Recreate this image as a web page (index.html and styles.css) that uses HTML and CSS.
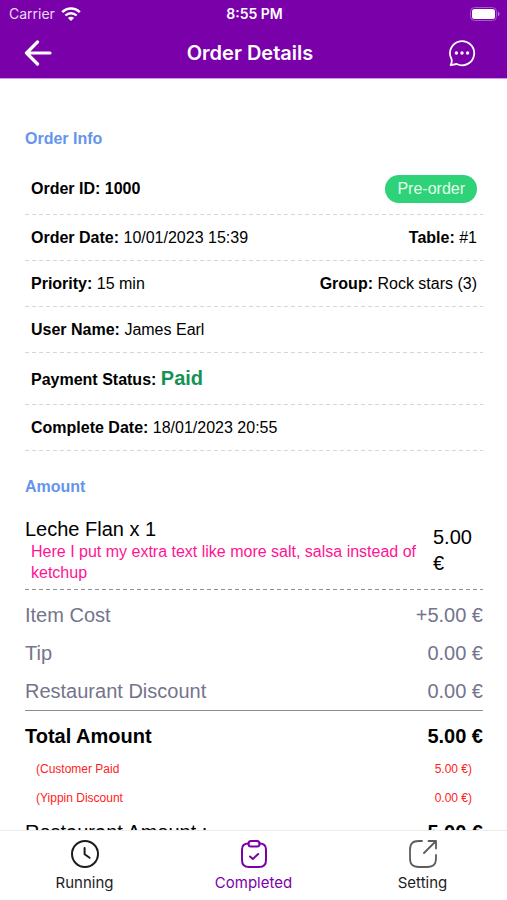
FILE: index.html
```html
<!DOCTYPE html>
<html lang="en">
<head>
<meta charset="utf-8">
<meta name="viewport" content="width=device-width, initial-scale=1">
<title>Order Details</title>
<link rel="stylesheet" href="styles.css">
</head>
<body>
<div class="app">
  <header class="header">
    <div class="status">
      <div class="carrier">
        <span>Carrier</span>
        <svg width="20" height="14" viewBox="0 0 20 14" fill="none" stroke="#fff" stroke-width="2.4">
          <path d="M1.2 5.2C6.1.2 13.9.2 18.8 5.2"/>
          <path d="M4.4 8.5c3.2-3.1 8-3.1 11.2 0"/>
          <path d="M10 14 6.9 11c1.8-1.6 4.4-1.6 6.2 0z" fill="#fff" stroke="none"/>
        </svg>
      </div>
      <span class="clock">8:55 PM</span>
      <svg class="battery" width="30" height="14" viewBox="0 0 30 14">
        <rect x=".5" y=".5" width="26" height="13" rx="4" fill="none" stroke="#a45acb"/>
        <rect x="2" y="2" width="23" height="10" rx="2.5" fill="#fff"/>
        <path d="M28 4.8c2 .6 2 3.8 0 4.4z" fill="#b87bdc"/>
      </svg>
    </div>
    <div class="titlebar">
      <button class="icon-button" type="button" aria-label="Back">
        <svg width="28" height="26" viewBox="0 0 28 26" fill="none" stroke="#fff" stroke-width="3.2" stroke-linecap="round" stroke-linejoin="round">
          <path d="M26 13H2.500M13.500 2 2.500 13l11 11"/>
        </svg>
      </button>
      <h1>Order Details</h1>
      <button class="icon-button" type="button" aria-label="Chat">
        <svg width="28" height="28" viewBox="0 0 28 28" fill="none" stroke="#fff" stroke-width="1.8" stroke-linejoin="round">
          <path d="M3.6 20.2A12.1 12.1 0 1 1 8.7 25L2.6 26.2C3.6 24.5 4 22.5 3.6 20.2z"/>
          <g fill="#fff" stroke="none"><circle cx="8.4" cy="14" r="1.700"/><circle cx="14" cy="14" r="1.700"/><circle cx="19.600" cy="14" r="1.700"/></g>
        </svg>
      </button>
    </div>
  </header>

  <main class="content">
    <h2>Order Info</h2>
    <ul class="info">
      <li class="first"><b>Order ID: 1000</b><span class="pill">Pre-order</span></li>
      <li><span><b>Order Date:</b> 10/01/2023 15:39</span><span><b>Table:</b> #1</span></li>
      <li><span><b>Priority:</b> 15 min</span><span><b>Group:</b> Rock stars (3)</span></li>
      <li><span><b>User Name:</b> James Earl</span></li>
      <li class="payment"><span><b>Payment Status:</b> <b class="paid">Paid</b></span></li>
      <li><span><b>Complete Date:</b> 18/01/2023 20:55</span></li>
    </ul>

    <h2>Amount</h2>
    <div class="item">
      <div class="item-text">
        <p class="item-name">Leche Flan x 1</p>
        <p class="item-note">Here I put my extra text like more salt, salsa instead of ketchup</p>
      </div>
      <div class="item-price">5.00 €</div>
    </div>
    <table class="costs">
      <tbody>
        <tr><th scope="row">Item Cost</th><td>+5.00 €</td></tr>
        <tr><th scope="row">Tip</th><td>0.00 €</td></tr>
        <tr><th scope="row">Restaurant Discount</th><td>0.00 €</td></tr>
      </tbody>
    </table>
    <table class="totals">
      <tbody>
        <tr><th scope="row">Total Amount</th><td>5.00 €</td></tr>
        <tr class="minor"><th scope="row">(Customer Paid</th><td>5.00 €)</td></tr>
        <tr class="minor"><th scope="row">(Yippin Discount</th><td>0.00 €)</td></tr>
        <tr><th scope="row" class="regular">Restaurant Amount :</th><td>5.00 €</td></tr>
      </tbody>
    </table>
  </main>

  <nav class="tabs">
    <a href="#running">
      <svg width="28" height="28" viewBox="0 0 28 28" fill="none" stroke="#1c1c1e" stroke-width="2" stroke-linecap="round" stroke-linejoin="round">
        <circle cx="14" cy="14" r="13"/><path d="M13.6 8v6.200l5 3.600"/>
      </svg>
      <span>Running</span>
    </a>
    <a href="#completed" class="active" aria-current="page">
      <svg width="28" height="28" viewBox="0 0 28 28" fill="none" stroke="#7a00aa" stroke-width="2" stroke-linecap="round" stroke-linejoin="round">
        <path d="M8.500 3.500C4 3.500 2 5 2 9.500V20c0 5 2 7 7 7h10c5 0 7-2 7-7V9.500c0-4.500-2-6-6.500-6"/>
        <rect x="8.500" y="1" width="11" height="5.500" rx="2.500"/>
        <path d="m10 16.500 2.800 2.500 5.400-5"/>
      </svg>
      <span>Completed</span>
    </a>
    <a href="#setting">
      <svg width="28" height="28" viewBox="0 0 28 28" fill="none" stroke="#5c5c5c" stroke-width="1.8" stroke-linecap="round" stroke-linejoin="round">
        <path d="M13 1h-3C3.500 1 1 3.500 1 10v8c0 6.500 2.500 9 9 9h8c6.500 0 9-2.500 9-9v-3"/>
        <path d="M15 13 27 1M19.500 1H27v7.500"/>
      </svg>
      <span>Setting</span>
    </a>
  </nav>
</div>
</body>
</html>
```
FILE: styles.css
```css
* { box-sizing: border-box; }

body {
  margin: 0;
  background: #fff;
  color: #000;
  font: 16px/18px "Liberation Sans", Arial, sans-serif;
}

h1, h2, p, ul { margin: 0; padding: 0; }

svg { display: block; }

.app {
  display: flex;
  flex-direction: column;
  height: 100vh;
}

.header {
  flex: none;
  background: #7a00aa;
  border-bottom: 1px solid #d795ee;
  color: #fff;
  font-family: Inter, sans-serif;
}

.status {
  display: grid;
  grid-template-columns: 1fr auto 1fr;
  align-items: center;
  height: 27px;
  padding: 0 7px 0 9px;
  font-size: 14px;
}

.carrier {
  display: flex;
  align-items: center;
  gap: 6px;
  color: #ecd9f5;
}

.clock { font-weight: 600; }

.battery { justify-self: end; }

.titlebar {
  display: flex;
  align-items: center;
  justify-content: space-between;
  height: 51px;
  padding: 0 31px 0 24px;
}

h1 {
  font-size: 20px;
  font-weight: 600;
  line-height: 24px;
}

.icon-button {
  padding: 0;
  border: 0;
  background: none;
  color: inherit;
  cursor: pointer;
}

.content {
  flex: 1;
  min-height: 0;
  overflow-y: auto;
  scrollbar-width: none;
  padding: 50px 24px 16px 25px;
}

h2 {
  color: #6495ed;
  font-size: 16px;
  line-height: 20px;
}

.info {
  list-style: none;
  margin: 14px 0 26px;
}

.info li {
  display: flex;
  align-items: center;
  justify-content: space-between;
  min-height: 46px;
  padding: 0 6px;
  background: repeating-linear-gradient(90deg, #d6d6d6 0 4px, transparent 4px 7px) bottom / 100% 1px no-repeat;
}

.info .first,
.info .payment { min-height: 52px; }

.paid {
  color: #149355;
  font-size: 20px;
}

.pill {
  padding: 5px 12px;
  border-radius: 14px;
  background: #2ed279;
  color: #e4ffe9;
}

.item {
  display: flex;
  align-items: center;
  justify-content: space-between;
  margin-top: 20px;
  padding-bottom: 7px;
  background: repeating-linear-gradient(90deg, #909090 0 4px, transparent 4px 7px) bottom / 100% 1px no-repeat;
}

.item-text { flex: 1; }

.item-name {
  font-size: 20px;
  line-height: 24px;
}

.item-note {
  padding: 0 10px 0 6px;
  color: #ff1493;
  line-height: 21px;
}

.item-price {
  width: 50px;
  font-size: 20px;
  line-height: 26px;
}

table {
  width: 100%;
  border-collapse: collapse;
  font-size: 20px;
}

th, td {
  height: 38px;
  padding: 0;
  font-weight: 400;
  text-align: left;
}

td { text-align: right; }

.costs {
  margin-top: 6px;
  border-bottom: 1px solid #8c8c8c;
  color: #74748c;
}

.totals { margin-top: 6px; }

.totals th, .totals td { font-weight: 700; }

.totals .regular { font-weight: 400; }

.totals .minor th, .totals .minor td {
  height: 29px;
  padding: 0 11px;
  color: #f22;
  font-size: 12px;
  font-weight: 400;
}

.tabs {
  flex: none;
  display: grid;
  grid-template-columns: repeat(3, 1fr);
  height: 70px;
  padding-top: 9px;
  border-top: 1px solid #ececec;
  background: #fff;
  font: 15px/20px Inter, sans-serif;
}

.tabs a {
  display: flex;
  flex-direction: column;
  align-items: center;
  gap: 5px;
  color: #1c1c1e;
  text-decoration: none;
}

.tabs .active { color: #7a00aa; }
```
